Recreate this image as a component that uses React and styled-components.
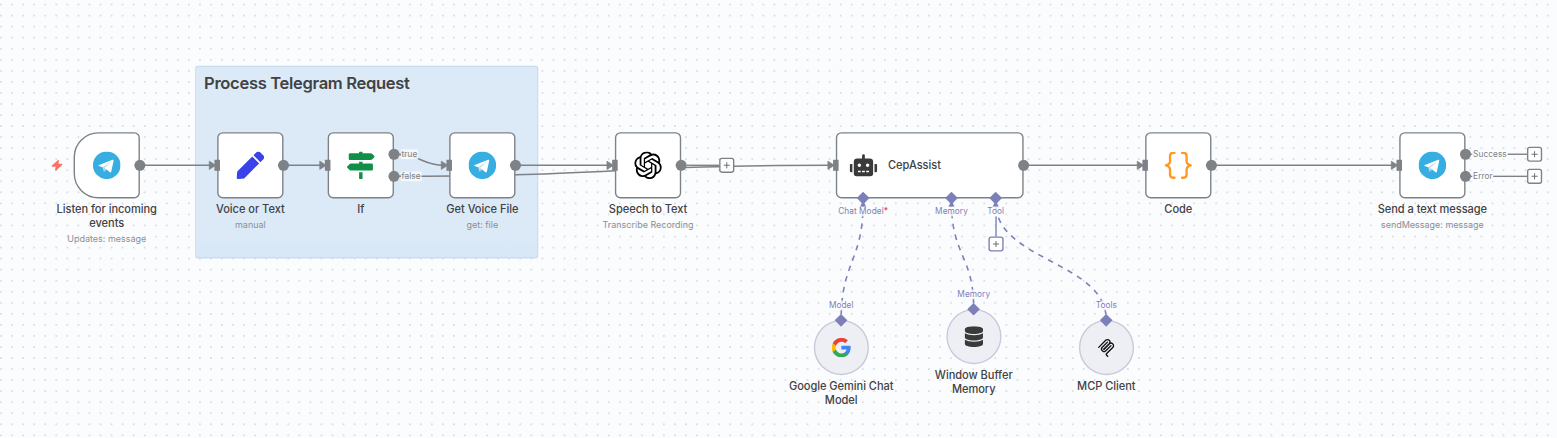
import React from 'react';
import styled, { createGlobalStyle, css } from 'styled-components';
import { FaPen, FaMapSigns, FaRobot, FaDatabase } from 'react-icons/fa';
import { SiOpenai } from 'react-icons/si';

const SCALE = 0.69044;
const GREY = '#7e8186';
const PURPLE = '#7d80b8';

const GlobalStyle = createGlobalStyle`
  html, body { margin: 0; padding: 0; overflow: hidden; }
  body { font-family: Inter, 'Liberation Sans', sans-serif; color: #3b3b40; }
  *, *::before, *::after { box-sizing: border-box; }
`;

const Canvas = styled.main`
  position: relative;
  width: 1557px;
  height: 438px;
  overflow: hidden;
  background-color: #fbfcfe;
`;

const DotGrid = styled.svg`
  display: block;
  width: 100%;
  height: 100%;
`;

const Viewport = styled.div`
  position: absolute;
  left: 0;
  top: 0;
  transform-origin: 0 0;
  transform: translate(73.6px, 132.15px) scale(${SCALE});
`;

const Sticky = styled.section`
  position: absolute;
  left: 176px;
  top: -96px;
  width: 497px;
  height: 279px;
  padding: 11px;
  border: 2px solid #c8dcf2;
  border-radius: 4px;
  background: linear-gradient(180deg, #dceaf8 88%, #d6e7f7 100%);
`;

const StickyTitle = styled.h2`
  margin: 0;
  font-size: 24px;
  line-height: 26px;
  font-weight: 600;
  letter-spacing: -0.48px;
  color: #414244;
  white-space: nowrap;
`;

const Edges = styled.svg`
  position: absolute;
  left: 0;
  top: 0;
  overflow: visible;
  fill: none;
  stroke-width: 2.1;
`;

const NodeWrap = styled.article`
  position: absolute;
  left: ${(p) => p.$x * 16}px;
  top: ${(p) => p.$y * 16}px;
  width: ${(p) => p.$w}px;
  display: flex;
  flex-direction: column;
  align-items: center;
`;

const shapes = {
  trigger: css`border-radius: 36px 8px 8px 36px;`,
  square: css`border-radius: 8px;`,
  agent: css`
    border-radius: 8px;
    justify-content: flex-start;
    gap: 16px;
    padding-left: 17.5px;
  `,
  circle: css`
    height: 80px;
    border-radius: 50%;
    border-color: #c8c9da;
    background: #eeeff5;
  `,
};

const NodeBox = styled.div`
  display: flex;
  align-items: center;
  justify-content: center;
  width: 100%;
  height: 96px;
  border: 2px solid ${GREY};
  background: #fff;
  ${(p) => shapes[p.$shape]}
  > svg { display: block; flex: none; }
`;

const Caption = styled.div`
  width: 180px;
  padding-top: 5.4px;
  text-align: center;
`;

const Name = styled.div`
  font-size: 16px;
  line-height: 20.2px;
  font-weight: 500;
  letter-spacing: -0.05px;
  color: #414246;
  white-space: pre-line;
`;

const Subtitle = styled.div`
  margin-top: 4.2px;
  font-size: 13px;
  line-height: 17px;
  color: #8b8e95;
  white-space: nowrap;
`;

/* Ports sit on top of the node border, one strip for each side. */
const InputPort = styled.i`
  position: absolute;
  left: -4px;
  top: 40px;
  width: 8px;
  height: 16px;
  background: ${GREY};
`;

const Outputs = styled.div`
  position: absolute;
  left: calc(100% - 8.5px);
  top: 0;
  height: 96px;
  display: flex;
  flex-direction: column;
  justify-content: center;
  gap: 16px;
`;

const OutputRow = styled.div`
  display: flex;
  align-items: center;
  height: 16px;
`;

const Dot = styled.i`
  flex: none;
  width: 16px;
  height: 16px;
  border-radius: 50%;
  background: ${GREY};
`;

const Wire = styled.i`
  flex: ${(p) => (p.$length ? 'none' : 1)};
  width: ${(p) => p.$length || 0}px;
  height: 2px;
  background: ${GREY};
`;

const OutputLine = styled.div`
  display: flex;
  align-items: center;
  width: ${(p) => (p.$length ? `${p.$length}px` : 'auto')};
`;

const PortLabel = styled.span`
  padding: 0 1px;
  font-size: 12px;
  line-height: 14px;
  letter-spacing: 0.08px;
  color: ${(p) => p.$color || GREY};
  background: rgba(251, 252, 254, 0.8);
  white-space: nowrap;
`;

const AiInputs = styled.div`
  position: absolute;
  left: 7.5px;
  top: 89px;
  display: grid;
  grid-template-columns: repeat(4, 64px);
`;

const AiInput = styled.div`
  grid-column: ${(p) => p.$column};
  display: flex;
  flex-direction: column;
  align-items: center;
`;

const Diamond = styled.i`
  width: 13px;
  height: 13px;
  transform: rotate(45deg);
  background: ${PURPLE};
`;

const AiLabel = styled(PortLabel)`
  margin: ${(p) => (p.$above ? '0 0 8px' : '6px 0 0')};
`;

const Stem = styled.i`
  width: 2px;
  height: 29px;
  background: ${PURPLE};
`;

const AiOutput = styled.div`
  position: absolute;
  bottom: calc(100% - 6.5px);
  display: flex;
  flex-direction: column;
  align-items: center;
`;

const CircleHolder = styled.div`
  position: relative;
  width: 100%;
  display: flex;
  justify-content: center;
`;

const Required = styled.b`
  color: #e5334b;
  font-weight: 500;
`;

const AddButton = styled.button`
  flex: none;
  display: flex;
  align-items: center;
  justify-content: center;
  width: 22px;
  height: 22px;
  padding: 0;
  border: 2px solid ${(p) => p.$color || GREY};
  border-radius: 4px;
  background: #fff;
`;

const TriggerBolt = styled.div`
  position: absolute;
  right: calc(100% + 15px);
  top: 39px;
  line-height: 0;
`;

const Plus = () => (
  <svg width="10" height="10" viewBox="0 0 10 10" stroke="#6f7277" strokeWidth="1.5">
    <path d="M5 0.5v9M0.5 5h9" />
  </svg>
);

const Bolt = () => (
  <svg width="18" height="18" viewBox="0 0 24 24" fill="#ff6f61" stroke="#ff6f61" strokeWidth="2.6" strokeLinejoin="round">
    <path d="M14.5 3L3 13.5H11L9.5 21L21 10.5H13Z" />
  </svg>
);

const Telegram = () => (
  <svg width="40" height="40" viewBox="0 0 240 240">
    <circle cx="120" cy="120" r="120" fill="#37aee2" />
    <path fill="#c8daea" d="M98 175c-3.888 0-3.227-1.468-4.568-5.17L82 132.207 170 80" />
    <path fill="#a9c9dd" d="M98 175c3 0 4.325-1.372 6-3l16-15.558-19.958-12.035" />
    <path fill="#fff" d="M100.04 144.41l48.36 35.729c5.519 3.045 9.501 1.468 10.876-5.123l19.685-92.763c2.015-8.08-3.08-11.746-8.36-9.349l-115.59 44.571c-7.89 3.165-7.843 7.567-1.438 9.528l29.663 9.259 68.673-43.325c3.242-1.966 6.218-.91 3.776 1.258" />
  </svg>
);

const Braces = () => (
  <svg width="40" height="40" viewBox="0 0 40 40" fill="none" stroke="#ff9922" strokeWidth="3.4" strokeLinecap="round" strokeLinejoin="round">
    <path d="M14.5 2H12.5Q8 2 8 6.5V14Q8 18.5 2 20Q8 21.5 8 26V33.5Q8 38 12.5 38H14.5" />
    <path d="M25.5 2H27.5Q32 2 32 6.5V14Q32 18.5 38 20Q32 21.5 32 26V33.5Q32 38 27.5 38H25.5" />
  </svg>
);

const Google = () => (
  <svg width="28" height="28" viewBox="1 1 22 22">
    <path fill="#4285f4" d="M22.56 12.25c0-.78-.07-1.53-.2-2.25H12v4.26h5.92c-.26 1.37-1.04 2.53-2.21 3.31v2.77h3.57c2.08-1.92 3.28-4.74 3.28-8.09z" />
    <path fill="#34a853" d="M12 23c2.97 0 5.46-.98 7.28-2.66l-3.57-2.77c-.98.66-2.23 1.06-3.71 1.06-2.86 0-5.29-1.93-6.16-4.53H2.18v2.84C3.99 20.53 7.7 23 12 23z" />
    <path fill="#fbbc05" d="M5.84 14.09c-.22-.66-.35-1.36-.35-2.09s.13-1.43.35-2.09V7.07H2.18C1.43 8.55 1 10.22 1 12s.43 3.45 1.18 4.93l3.66-2.84z" />
    <path fill="#ea4335" d="M12 5.38c1.62 0 3.06.56 4.21 1.64l3.15-3.15C17.45 2.09 14.97 1 12 1 7.7 1 3.99 3.47 2.18 7.07l3.66 2.84c.87-2.6 3.3-4.53 6.16-4.53z" />
  </svg>
);

const Mcp = () => (
  <svg width="27" height="27" viewBox="0 0 180 180" fill="none" stroke="#111" strokeWidth="13" strokeLinecap="round">
    <path d="M18 84.8528L85.8822 16.9706C95.2548 7.59798 110.451 7.59798 119.823 16.9706C129.196 26.3431 129.196 41.5391 119.823 50.9117L68.5581 102.177" />
    <path d="M69.2652 101.47L119.823 50.9117C129.196 41.5391 144.392 41.5391 153.765 50.9117L154.118 51.2652C163.491 60.6378 163.491 75.8338 154.118 85.2063L92.7248 146.6C89.6006 149.724 89.6006 154.789 92.7248 157.913L105.331 170.52" />
    <path d="M102.853 33.9411L52.6482 84.1457C43.2756 93.5183 43.2756 108.714 52.6482 118.087C62.0208 127.459 77.2167 127.459 86.5893 118.087L136.794 67.8822" />
  </svg>
);

function Output({ label, add }) {
  return (
    <OutputRow>
      <Dot />
      {(label || add) && (
        <OutputLine $length={add}>
          <Wire $length={2.5} />
          {label && <PortLabel>{label}</PortLabel>}
          {add && <Wire />}
          {add && <AddButton><Plus /></AddButton>}
        </OutputLine>
      )}
    </OutputRow>
  );
}

function Node({ x, w = 96, shape = 'square', icon, inline, name, sub, outputs = [{}], children }) {
  return (
    <NodeWrap $x={x} $y={0} $w={w}>
      <NodeBox $shape={shape}>
        {icon}
        {inline && <Name>{inline}</Name>}
      </NodeBox>
      {name && (
        <Caption>
          <Name>{name}</Name>
          {sub && <Subtitle>{sub}</Subtitle>}
        </Caption>
      )}
      {shape !== 'trigger' && <InputPort />}
      <Outputs>
        {outputs.map((o, i) => <Output key={i} {...o} />)}
      </Outputs>
      {children}
    </NodeWrap>
  );
}

function SubNode({ x, y, icon, name, output }) {
  return (
    <NodeWrap $x={x} $y={y} $w={79.5}>
      <CircleHolder>
        <NodeBox $shape="circle">{icon}</NodeBox>
        <AiOutput>
          <AiLabel $above $color={PURPLE}>{output}</AiLabel>
          <Diamond />
        </AiOutput>
      </CircleHolder>
      <Caption><Name>{name}</Name></Caption>
    </NodeWrap>
  );
}

const MAIN_EDGES = [
  'M96 48H200',
  'M304 48H360',
  'M464 32C504 32 504 48 536 48',
  'M464 64C784 64 784 48 1096 48',
  'M640 48H776',
  'M1376 48H1544',
  'M1648 48H1912',
];

const ARROWS = [208, 368, 544, 784, 1104, 1552, 1920];

const AI_EDGES = [
  'M1111.7 272C1111.7 187 1143.5 187 1143.5 102',
  'M1303.7 256C1303.7 179 1271.5 179 1271.5 102',
  'M1495.7 272C1495.7 187 1335.5 187 1335.5 102',
];

export default function App() {
  return (
    <>
      <GlobalStyle />
      <Canvas>
        <DotGrid>
          <pattern id="dots" x="-4.4" y="-1" width="11.047" height="11.047" patternUnits="userSpaceOnUse">
            <circle cx="5.5" cy="5.5" r="0.6" fill="#a4a6ab" />
          </pattern>
          <rect width="100%" height="100%" fill="url(#dots)" />
        </DotGrid>
        <Viewport>
          <Sticky>
            <StickyTitle>Process Telegram Request</StickyTitle>
          </Sticky>

          <Edges width="1" height="1">
            <g stroke={GREY}>
              {MAIN_EDGES.map((d) => <path key={d} d={d} />)}
            </g>
            <g fill={GREY} stroke={GREY} strokeWidth="1" strokeLinejoin="round">
              {ARROWS.map((x) => <path key={x} d={`M${x - 11.5} 42L${x - 2} 48L${x - 11.5} 54Z`} />)}
            </g>
            <g stroke={PURPLE} strokeWidth="2.3" strokeDasharray="8 8" strokeDashoffset="8">
              {AI_EDGES.map((d) => <path key={d} d={d} />)}
            </g>
            <g fill={PURPLE}>
              {[1143.5, 1271.5, 1335.5].map((x) => <path key={x} d={`M${x - 4.5} 108L${x} 99L${x + 4.5} 108Z`} />)}
            </g>
          </Edges>

          <Node x={0} shape="trigger" icon={<Telegram />} name={'Listen for incoming\nevents'} sub="Updates: message">
            <TriggerBolt><Bolt /></TriggerBolt>
          </Node>
          <Node x={13} icon={<FaPen size={40} color="#3a42e9" />} name="Voice or Text" sub="manual" />
          <Node x={23} icon={<FaMapSigns size={40} color="#108f49" />} name="If" outputs={[{ label: 'true' }, { label: 'false' }]} />
          <Node x={34} icon={<Telegram />} name="Get Voice File" sub="get: file" />
          <Node x={49} icon={<SiOpenai size={40} color="#000" />} name="Speech to Text" sub="Transcribe Recording" outputs={[{ add: 69 }]} />
          <Node x={69} w={272} shape="agent" icon={<FaRobot size={40} color="#3a3a3a" />} inline="CepAssist">
            <AiInputs>
              <AiInput $column={1}>
                <Diamond />
                <AiLabel $color={PURPLE}>Chat Model<Required>*</Required></AiLabel>
              </AiInput>
              <AiInput $column={3}>
                <Diamond />
                <AiLabel $color={PURPLE}>Memory</AiLabel>
              </AiInput>
              <AiInput $column={4}>
                <Diamond />
                <AiLabel $color={PURPLE}>Tool</AiLabel>
                <Stem />
                <AddButton $color={PURPLE}><Plus /></AddButton>
              </AiInput>
            </AiInputs>
          </Node>
          <Node x={97} icon={<Braces />} name="Code" />
          <Node x={120} icon={<Telegram />} name="Send a text message" sub="sendMessage: message" outputs={[{ label: 'Success', add: 103 }, { label: 'Error', add: 103 }]} />

          <SubNode x={67} y={17} icon={<Google />} name={'Google Gemini Chat\nModel'} output="Model" />
          <SubNode x={79} y={16} icon={<FaDatabase size={30} color="#3a3a3a" />} name={'Window Buffer\nMemory'} output="Memory" />
          <SubNode x={91} y={17} icon={<Mcp />} name="MCP Client" output="Tools" />
        </Viewport>
      </Canvas>
    </>
  );
}
